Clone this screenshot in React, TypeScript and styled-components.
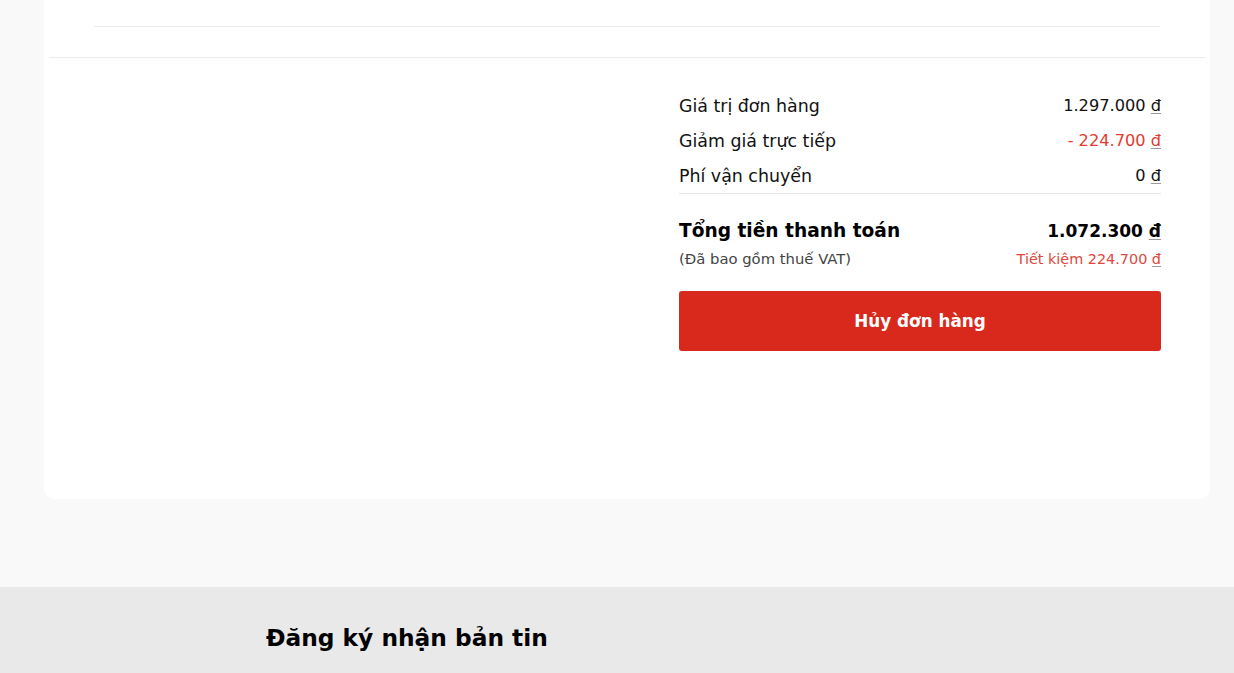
import React from "react"
import styled, { createGlobalStyle } from "styled-components"

const GlobalStyle = createGlobalStyle`
    html, body {
        margin: 0;
        padding: 0;
        background: #f9f9f9;
        font-family: "DejaVu Sans", "Noto Sans", sans-serif;
        color: #111;
    }
    * { box-sizing: border-box; }
`

interface ISummaryLine {
    label: string
    value: string
    tone?: "normal" | "danger"
}

const lines: ISummaryLine[] = [
    { label: "Giá trị đơn hàng", value: "1.297.000" },
    { label: "Giảm giá trực tiếp", value: "- 224.700", tone: "danger" },
    { label: "Phí vận chuyển", value: "0" },
]

const App: React.FC = () => {
    return (
        <>
            <GlobalStyle />
            <Page>
                <Card>
                    <ItemsEnd>
                        <ItemDivider />
                    </ItemsEnd>
                    <CardDivider />
                    <SummaryWrap>
                        <Summary>
                            {lines.map((v) => (
                                <Line key={v.label}>
                                    <span>{v.label}</span>
                                    <Amount tone={v.tone}>
                                        {v.value} <Dong>đ</Dong>
                                    </Amount>
                                </Line>
                            ))}
                            <TotalBlock>
                                <TotalRow>
                                    <span>Tổng tiền thanh toán</span>
                                    <TotalValue>
                                        1.072.300 <Dong>đ</Dong>
                                    </TotalValue>
                                </TotalRow>
                                <NoteRow>
                                    <span>(Đã bao gồm thuế VAT)</span>
                                    <Saving>
                                        Tiết kiệm 224.700 <Dong>đ</Dong>
                                    </Saving>
                                </NoteRow>
                            </TotalBlock>
                            <CancelButton type="button">Hủy đơn hàng</CancelButton>
                        </Summary>
                    </SummaryWrap>
                </Card>
            </Page>
            <Newsletter>
                <NewsTitle>Đăng ký nhận bản tin</NewsTitle>
            </Newsletter>
        </>
    )
}

const Page = styled.main`
    padding: 0 24px 88px 44px;
`

const Card = styled.section`
    background: #fff;
    border-radius: 0 0 10px 10px;
    padding-bottom: 148px;
`

const ItemsEnd = styled.div`
    padding: 26px 50px 0;
`

const ItemDivider = styled.div`
    height: 1px;
    background: #e8e8ee;
`

const CardDivider = styled.div`
    height: 1px;
    background: #ececec;
    margin: 30px 4px 0 5px;
`

const SummaryWrap = styled.div`
    display: flex;
    justify-content: flex-end;
    padding: 30px 49px 0;
`

const Summary = styled.div`
    width: 482px;
    display: flex;
    flex-direction: column;
`

const Line = styled.div`
    display: flex;
    justify-content: space-between;
    align-items: center;
    height: 35px;
    font-size: 17.4px;
    color: #111;
    &:nth-of-type(3) {
        height: 36px;
        border-bottom: 1px solid #e6e6e6;
    }
`

const Amount = styled.span<{ tone?: "normal" | "danger" }>`
    font-size: 16.2px;
    color: ${(p) => (p.tone === "danger" ? "#e53a2f" : "#111")};
`

const Dong = styled.span`
    text-decoration: underline;
    text-decoration-color: #9a9a9a;
    text-underline-offset: 2px;
`

const TotalBlock = styled.div`
    padding-top: 23px;
`

const TotalRow = styled.div`
    display: flex;
    justify-content: space-between;
    align-items: center;
    line-height: 28px;
    font-size: 18.6px;
    font-weight: 700;
    color: #000;
`

const TotalValue = styled.span`
    font-size: 17px;
`

const NoteRow = styled.div`
    display: flex;
    justify-content: space-between;
    align-items: center;
    line-height: 20px;
    margin-top: 4px;
    font-size: 14.8px;
    color: #444;
`

const Saving = styled.span`
    font-size: 14.4px;
    color: #e0463c;
`

const CancelButton = styled.button`
    margin-top: 22px;
    height: 60px;
    border: none;
    border-radius: 3px;
    background: #d9281c;
    color: #fff;
    font-family: inherit;
    font-size: 16.8px;
    font-weight: 700;
    cursor: pointer;
`

const Newsletter = styled.footer`
    background: #e9e9e9;
    padding: 36px 0 40px 266px;
`

const NewsTitle = styled.h2`
    margin: 0;
    font-size: 23.3px;
    line-height: 30px;
    font-weight: 700;
    color: #000;
`

export default App
